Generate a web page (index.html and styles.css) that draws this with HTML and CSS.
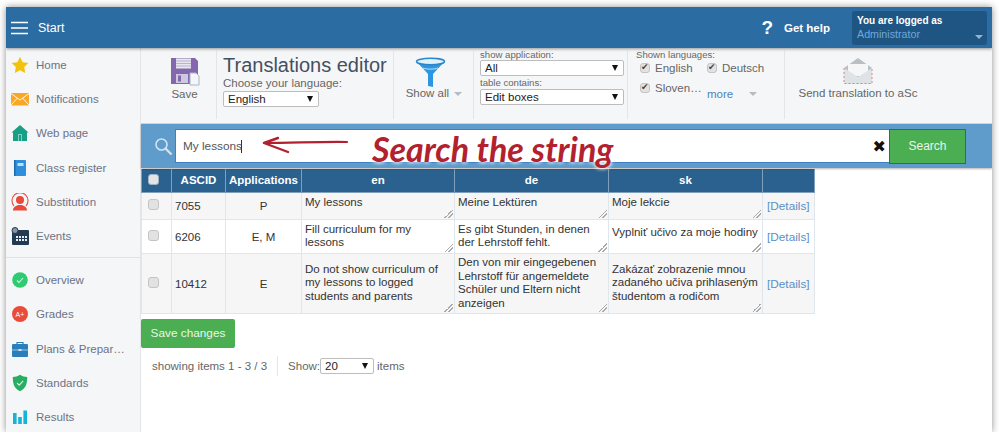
FILE: index.html
```html
<!DOCTYPE html>
<html lang="en">
<head>
    <meta charset="UTF-8">
    <title>Translations editor</title>
    <link rel="stylesheet" href="styles.css">
</head>
<body>
<div class="window">
    <header class="topbar">
        <svg class="burger" width="17" height="14" viewBox="0 0 17 14"><path d="M0 1.500h17M0 7h17M0 12.500h17" stroke="#fff" stroke-width="1.400"/></svg>
        <span class="start">Start</span>
        <span class="help-mark">?</span>
        <span class="help">Get help</span>
        <div class="logged">
            <div class="logged-title">You are logged as</div>
            <div class="logged-name">Administrator</div>
            <i class="logged-caret"></i>
        </div>
    </header>
    <div class="layout">
        <nav class="sidebar">
            <a class="nav-item"><svg width="18" height="18" viewBox="0 0 18 18"><path d="M9 .8l2.600 5.400 5.800.8-4.200 4.100 1 5.900L9 14.200 3.800 17l1-5.900L.6 7l5.800-.8z" fill="#f4c20d"/></svg><span>Home</span></a>
            <a class="nav-item"><svg width="18" height="18" viewBox="0 0 18 18"><rect y="3" width="18" height="12.500" fill="#f9a825"/><path d="M0 3.500l9 6.500 9-6.500M0 15l6.500-7M18 15l-6.500-7" fill="none" stroke="#fff" stroke-width=".9"/></svg><span>Notifications</span></a>
            <a class="nav-item"><svg width="18" height="18" viewBox="0 0 18 18"><path d="M9 1l8.500 7.500H16V17H2V8.500H.5z" fill="#17a085"/><path d="M7 10h4v7H7z" fill="#7fd0bd"/><path d="M8 11h2v6H8z" fill="#17a085"/></svg><span>Web page</span></a>
            <a class="nav-item"><svg width="18" height="18" viewBox="0 0 18 18"><rect x="3" y="1" width="12" height="16" rx="1" fill="#2f8fdc"/><rect x="3" y="1" width="1.500" height="16" fill="#1b6db0"/><rect x="6.500" y="4" width="6" height="3" fill="#bfe0f8"/></svg><span>Class register</span></a>
            <a class="nav-item"><svg width="18" height="18" viewBox="0 0 18 18"><path d="M3 13A8 8 0 1 1 15 13" fill="none" stroke="#e8493a" stroke-width="1.100"/><circle cx="9" cy="7" r="4" fill="#e8493a"/><path d="M2 17.500c0-3.500 3-4.500 5-5.500h4c2 1 5 2 5 5.500z" fill="#e8493a"/></svg><span>Substitution</span></a>
            <a class="nav-item"><svg width="18" height="18" viewBox="0 0 18 18"><rect x="1" y="3" width="17" height="15" rx="1" fill="#243a52"/><g fill="#e8eef3"><rect x="5" y="9" width="2" height="2"/><rect x="8" y="9" width="2" height="2"/><rect x="11" y="9" width="2" height="2"/><rect x="14" y="9" width="2" height="2"/><rect x="5" y="12" width="2" height="2"/><rect x="8" y="12" width="2" height="2"/><rect x="11" y="12" width="2" height="2"/><rect x="14" y="12" width="2" height="2"/></g><circle cx="4" cy="3.500" r="3" fill="#8a97a3" stroke="#243a52"/></svg><span>Events</span></a>
            <div class="nav-sep"></div>
            <a class="nav-item"><svg width="18" height="18" viewBox="0 0 18 18"><circle cx="9" cy="9" r="7.800" fill="#2ecc71"/><path d="M6 9.500l2 2 4-4.500" fill="none" stroke="#d8f7e4" stroke-width="1.100"/></svg><span>Overview</span></a>
            <a class="nav-item"><svg width="18" height="18" viewBox="0 0 18 18"><circle cx="9" cy="9" r="8" fill="#ea4c3c"/><text x="4.500" y="12" class="grade-mark">A+</text></svg><span>Grades</span></a>
            <a class="nav-item"><svg width="18" height="18" viewBox="0 0 18 18"><path d="M6 4.500V2.500h6v2" fill="none" stroke="#2a7fba" stroke-width="1.200"/><rect x="1" y="4" width="16" height="13" rx="1" fill="#2a7fba"/><path d="M1 10h16" stroke="#cfe4f2" stroke-width=".7"/><rect x="7.500" y="9" width="3" height="2" fill="#cfe4f2"/></svg><span>Plans &amp; Prepar…</span></a>
            <a class="nav-item"><svg width="18" height="18" viewBox="0 0 18 18"><path d="M9 .8c2.500 1.700 4.500 2.200 7.200 2.200 0 6-.8 11-7.200 14.200C2.600 14 1.800 9 1.800 3 4.500 3 6.500 2.500 9 .8z" fill="#27ae60"/><path d="M6 9l2.200 2.200 4-4.400" fill="none" stroke="#d8f7e4" stroke-width="1.100"/></svg><span>Standards</span></a>
            <a class="nav-item"><svg width="18" height="18" viewBox="0 0 18 18"><g fill="#16b4d8"><rect x="2" y="5" width="3.600" height="11"/><rect x="7.200" y="9" width="3.600" height="7"/><rect x="12.400" y="2.500" width="3.600" height="13.500"/></g></svg><span>Results</span></a>
        </nav>
        <main class="content">
            <section class="toolbar">
                <div class="tool tool-save">
                    <svg width="30" height="29" viewBox="0 0 30 29"><path d="M1 1h24l3 3v13h-8v10H1z" fill="#8468ad"/><rect x="6" y="1.500" width="15" height="10" fill="#e8e6ee"/><path d="M6 4h15M6 6.500h15M6 9h15" stroke="#b9b2cc"/><rect x="6" y="17" width="12" height="9" fill="#cfc9df"/><rect x="8" y="18.500" width="3" height="6" fill="#8468ad"/><path d="M20 16h6l3 3v9h-9z" fill="#f4f6fa" stroke="#a9b6c8"/></svg>
                    <span>Save</span>
                </div>
                <div class="tool tool-title">
                    <h1>Translations editor</h1>
                    <label class="choose">Choose your language:</label>
                    <div class="select select-lang"><select><option>English</option></select></div>
                </div>
                <div class="tool tool-filter">
                    <svg width="31" height="30" viewBox="0 0 31 30"><path d="M1 4c4-2 25-2 29 0L18 17v13l-5-1V17z" fill="#2c97e0"/><ellipse cx="15.500" cy="4.500" rx="14" ry="3.200" fill="#dff1fb" stroke="#2c86cc" stroke-width="1.400"/><path d="M8 11c3 1.500 12 1.500 15 0" fill="none" stroke="#bfe3f8"/></svg>
                    <span class="with-caret">Show all <i class="caret"></i></span>
                </div>
                <div class="tool tool-selects">
                    <label>show application:</label>
                    <div class="select"><select><option>All</option></select></div>
                    <label>table contains:</label>
                    <div class="select"><select><option>Edit boxes</option></select></div>
                </div>
                <div class="tool tool-langs">
                    <label>Shown languages:</label>
                    <div class="lang-grid">
                        <span class="check"><input type="checkbox" checked>English</span>
                        <span class="check"><input type="checkbox" checked>Deutsch</span>
                        <span class="check"><input type="checkbox" checked>Sloven…</span>
                        <span class="more"><a>more</a><i class="caret"></i></span>
                    </div>
                </div>
                <div class="tool tool-send">
                    <svg width="30" height="26" viewBox="0 0 30 26"><path d="M1 10L15 0l14 10v16H1z" fill="#b9bfc5"/><path d="M5 6h20v12H5z" fill="#f4f6f7"/><path d="M1 10l14 9 14-9v16H1z" fill="#dfe3e6"/><path d="M1 10v15.500h28V10" fill="none" stroke="#d98a80" stroke-dasharray="2 2"/></svg>
                    <span>Send translation to aSc</span>
                </div>
            </section>
            <section class="searchbar">
                <svg class="magnifier" width="19" height="19" viewBox="0 0 19 19"><circle cx="7.500" cy="7.500" r="5.500" fill="none" stroke="#cfe3f2" stroke-width="1.600"/><path d="M11.500 11.500l6 6" stroke="#cfe3f2" stroke-width="2.400"/></svg>
                <div class="search-box">
                    <input type="text" value="My lessons">
                    <span class="clear">✖</span>
                </div>
                <button class="search-btn">Search</button>
            </section>
            <table class="grid">
                <colgroup>
                    <col class="c-check"><col class="c-id"><col class="c-app"><col class="c-en"><col class="c-de"><col class="c-sk"><col class="c-link">
                </colgroup>
                <thead>
                    <tr><th class="first"><input type="checkbox" class="box"></th><th>ASCID</th><th>Applications</th><th>en</th><th>de</th><th>sk</th><th></th></tr>
                </thead>
                <tbody>
                    <tr class="row-1 odd">
                        <td class="first"><input type="checkbox" class="box"></td><td class="num">7055</td><td class="mid">P</td>
                        <td class="tr one">My lessons</td><td class="tr one">Meine Lektüren</td><td class="tr one">Moje lekcie</td>
                        <td class="link"><a class="details">[Details]</a></td>
                    </tr>
                    <tr class="row-2">
                        <td class="first"><input type="checkbox" class="box"></td><td class="num">6206</td><td class="mid">E, M</td>
                        <td class="tr">Fill curriculum for my lessons</td><td class="tr">Es gibt Stunden, in denen der Lehrstoff fehlt.</td><td class="tr one">Vyplniť učivo za moje hodiny</td>
                        <td class="link"><a class="details">[Details]</a></td>
                    </tr>
                    <tr class="row-3 odd">
                        <td class="first"><input type="checkbox" class="box"></td><td class="num">10412</td><td class="mid">E</td>
                        <td class="tr">Do not show curriculum of my lessons to logged students and parents</td><td class="tr">Den von mir eingegebenen Lehrstoff für angemeldete Schüler und Eltern nicht anzeigen</td><td class="tr">Zakázať zobrazenie mnou zadaného učiva prihlaseným študentom a rodičom</td>
                        <td class="link"><a class="details">[Details]</a></td>
                    </tr>
                </tbody>
            </table>
            <button class="save-btn">Save changes</button>
            <div class="pager">
                <span class="pager-count">showing items 1 - 3 / 3</span>
                <span class="pager-show">Show:</span>
                <div class="select select-page"><select><option>20</option></select></div>
                <span>items</span>
            </div>
        </main>
    </div>

    <!-- annotation drawn over the screenshot -->
    <span class="text-caret"></span>
    <svg class="note-arrow" width="90" height="20" viewBox="0 0 90 20"><path d="M85 7C60 6.500 30 8 3 8" fill="none" stroke="#b3202e" stroke-width="2.200" stroke-linecap="round"/><path d="M16 3L2 8l24 9" fill="none" stroke="#b3202e" stroke-width="2.400" stroke-linecap="round" stroke-linejoin="round"/></svg>
    <div class="note-text">Search the string</div>
</div>
</body>
</html>
```

FILE: styles.css
```css
* {
    box-sizing: border-box;
}
body {
    margin: 0;
    background: #fff;
    font-family: "Liberation Sans", Arial, sans-serif;
    font-size: 12px;
    color: #333;
}
.window {
    position: relative;
    width: 986px;
    height: 425px;
    margin: 7px 0 0 6px;
    background: #fff;
    box-shadow: 0 0 7px rgba(0,0,0,0.45);
    overflow: hidden;
}

/* top bar */
.topbar {
    display: flex;
    align-items: center;
    height: 41px;
    background: #2b6ca3;
    color: #fff;
    box-shadow: 0 1px 3px rgba(0,0,0,0.4);
    position: relative;
    z-index: 2;
}
.burger {
    margin-left: 5px;
}
.start {
    margin-left: 10px;
    font-size: 12.500px;
}
.help-mark {
    margin-left: auto;
    font-size: 19px;
    font-weight: bold;
}
.help {
    margin-left: 11px;
    font-weight: bold;
    font-size: 11.500px;
}
.logged {
    position: relative;
    width: 135px;
    height: 34px;
    margin: 0 5px 0 22px;
    padding: 3px 5px;
    background: #1f5583;
    border-radius: 3px;
}
.logged-title {
    font-weight: bold;
    font-size: 10px;
    line-height: 13px;
}
.logged-name {
    color: #6fa8da;
    line-height: 14px;
    font-size: 10.700px;
}
.logged-caret {
    position: absolute;
    right: 4px;
    bottom: 6px;
    border: 4px solid transparent;
    border-top: 4px solid #8fb6d8;
    border-bottom: 0;
}

.layout {
    display: flex;
    height: 384px;
}

/* sidebar */
.sidebar {
    width: 135px;
    flex: none;
    background: #f5f6f8;
    border-right: 1px solid #e3e5e8;
}
.nav-item {
    display: flex;
    align-items: center;
    height: 34.200px;
    padding-left: 5px;
    color: #6c7386;
    font-size: 11.500px;
}
.nav-item svg {
    flex: none;
    margin-right: 7px;
}
.nav-item span {
    white-space: nowrap;
}
.nav-sep {
    height: 1px;
    margin: 4px 0 5px;
    background: #e1e3e6;
}
.grade-mark {
    font-size: 7px;
    fill: #fff;
}

/* toolbar */
.content {
    flex: 1;
    min-width: 0;
}
.toolbar {
    display: flex;
    height: 76px;
    padding: 3px 0 4px;
    background: #f5f6f8;
    border-bottom: 1px solid #d8d8d8;
}
.tool {
    border-right: 1px solid #e3e5e8;
    flex: none;
}
.tool label {
    display: block;
    color: #666;
    font-size: 9.600px;
    line-height: 10px;
}
.tool-save {
    display: flex;
    flex-direction: column;
    align-items: center;
    width: 76px;
    padding: 6px 0 0 12px;
    color: #666;
    font-size: 11.500px;
}
.tool-save span {
    margin-top: 2px;
}
.tool-title {
    width: 177px;
    padding: 2px 0 0 6px;
}
.tool-title h1 {
    margin: 0;
    font-size: 20px;
    font-weight: normal;
    line-height: 24px;
    color: #45505f;
}
.tool-title .choose {
    font-size: 11.500px;
    line-height: 13px;
    margin: 0 0 1px;
    color: #666;
}
.tool-filter {
    display: flex;
    flex-direction: column;
    align-items: center;
    width: 80px;
    padding: 6px 6px 0 0;
    color: #666;
    font-size: 11.500px;
}
.with-caret {
    margin: 0 -7px 0 0;
    white-space: nowrap;
}
.caret {
    display: inline-block;
    border: 4px solid transparent;
    border-top: 4px solid #b5bbc2;
    border-bottom: 0;
    vertical-align: middle;
    margin-left: 2px;
}
.tool-selects {
    width: 154px;
    padding: 0 3px 0 6px;
}
.tool-selects label:first-child,
.tool-langs label:first-child {
    margin-top: -1px;
}
.tool-selects .select + label {
    margin: 2px 0 1px;
}
.tool-langs {
    width: 157px;
    padding-left: 8px;
}
.lang-grid {
    display: grid;
    grid-template-columns: 67px 1fr;
    grid-auto-rows: 20px;
    margin-top: -2px;
    padding-left: 4px;
    color: #666;
    font-size: 11.500px;
}
.check {
    display: flex;
    align-items: center;
    white-space: nowrap;
}
.check input,
.box {
    appearance: none;
    position: relative;
    flex: none;
    width: 10px;
    height: 10px;
    margin: 0 5px 0 0;
    background: #e2e2e2;
    border: 1px solid #c4c4c4;
    border-radius: 3px;
}
.check input:checked::after {
    content: "✔";
    position: absolute;
    left: 0;
    top: -2px;
    font: 9px "DejaVu Sans", sans-serif;
    color: #444;
}
.more {
    display: flex;
    align-items: center;
    gap: 14px;
    margin-top: 11px;
    color: #4a83b8;
}
.tool-send {
    display: flex;
    flex-direction: column;
    align-items: center;
    width: 146px;
    padding-top: 7px;
    border-right: none;
    color: #666;
    font-size: 11.500px;
    white-space: nowrap;
}
.tool-send span {
    margin-top: 3px;
}

/* selects */
.select {
    position: relative;
    height: 16px;
    background: #fff;
    border: 1px solid #bdbdbd;
    border-radius: 2px;
}
.select::after {
    content: "";
    position: absolute;
    right: 5px;
    top: 4px;
    border: 3.500px solid transparent;
    border-top: 6px solid #111;
    border-bottom: 0;
}
.select select {
    appearance: none;
    display: block;
    width: 100%;
    height: 100%;
    padding: 0 0 0 4px;
    border: 0;
    background: transparent;
    font: 11.500px "Liberation Sans", Arial, sans-serif;
    color: #222;
}
.select-lang {
    width: 96px;
}
.select-page {
    width: 54px;
    margin-right: 3px;
}

/* search */
.searchbar {
    display: flex;
    align-items: center;
    height: 44px;
    background: #5f9ccb;
    box-shadow: 0 1px 2px rgba(0,0,0,0.3);
    position: relative;
}
.magnifier {
    margin-left: 13px;
}
.search-box {
    display: flex;
    align-items: center;
    width: 714px;
    height: 34px;
    margin-left: 2px;
    background: #fff;
    border: 1px solid #3f7fc4;
    border-right: 0;
}
.search-box input {
    flex: 1;
    border: 0;
    outline: 0;
    padding: 0 0 0 7px;
    font: 11.800px "Liberation Sans", Arial, sans-serif;
    color: #555;
}
.clear {
    margin-right: 3px;
    font: 16px "DejaVu Sans", sans-serif;
    color: #111;
}
.search-btn {
    width: 77px;
    height: 35px;
    background: #4cae52;
    border: 1px solid #3b6a45;
    color: #e9f6ea;
    font: 12px "Liberation Sans", Arial, sans-serif;
}

/* table */
.grid {
    width: 673px;
    margin-top: 1px;
    table-layout: fixed;
    border-collapse: collapse;
    font-size: 11.500px;
}
.c-check { width: 30px; }
.c-id { width: 54px; }
.c-app { width: 76px; }
.c-en { width: 153px; }
.c-de { width: 154px; }
.c-sk { width: 154px; }
.c-link { width: 52px; }
.grid th {
    height: 23px;
    padding: 0;
    background: #2b618f;
    border: 1px solid #7f9fbb;
    border-top: 0;
    color: #fff;
    font-size: 11.500px;
}
.grid td {
    padding: 0 3px;
    border: 1px solid #dde7ed;
    line-height: 13.500px;
    color: #333;
}
.grid .odd {
    background: #f6f6f6;
}
.row-1 { height: 27px; }
.row-2 { height: 34px; }
.row-3 { height: 60px; }
.grid .mid,
.grid .num,
.grid .link {
    padding-top: 3px;
}
.grid .mid {
    text-align: center;
}
.grid .link {
    padding-left: 4px;
    padding-right: 0;
}
.grid .first {
    text-align: left;
    padding: 0 0 2px 6px;
}
.grid .box {
    display: block;
    margin: 0;
    width: 11px;
    height: 11px;
}
.grid th .box {
    background: #e4e4e4;
    border-color: #9eb3c6;
}
.tr {
    background: linear-gradient(135deg, transparent 50%, #aaa 50%, #aaa 57%, transparent 57%, transparent 71%, #aaa 71%, #aaa 78%, transparent 78%) right 1px bottom 1px / 9px 9px no-repeat;
}
.grid .one {
    padding-bottom: 6px;
}
.details {
    color: #5b8fc4;
    font-size: 11.800px;
}

/* bottom */
.save-btn {
    display: block;
    width: 94px;
    height: 29px;
    margin-top: 5px;
    background: #4cae52;
    border: 0;
    border-radius: 2px;
    color: #e9f6ea;
    font: 11.800px "Liberation Sans", Arial, sans-serif;
}
.pager {
    display: flex;
    align-items: center;
    height: 20px;
    margin: 8px 0 0 11px;
    color: #666;
    font-size: 11.500px;
}
.pager-count {
    padding-right: 10px;
    margin-right: 10px;
    line-height: 20px;
    border-right: 1px solid #e6e6e6;
}

/* annotation */
.text-caret {
    position: absolute;
    left: 235px;
    top: 133px;
    width: 1px;
    height: 13px;
    background: #333;
}
.note-arrow {
    position: absolute;
    left: 256px;
    top: 128px;
}
.note-text {
    position: absolute;
    left: 366px;
    top: 122px;
    font-family: Lato, sans-serif;
    font-style: italic;
    font-weight: bold;
    font-size: 34px;
    line-height: 40px;
    color: #b3202e;
    white-space: nowrap;
    text-shadow: 0 0 4px #fff, 0 0 4px #fff;
}
```
